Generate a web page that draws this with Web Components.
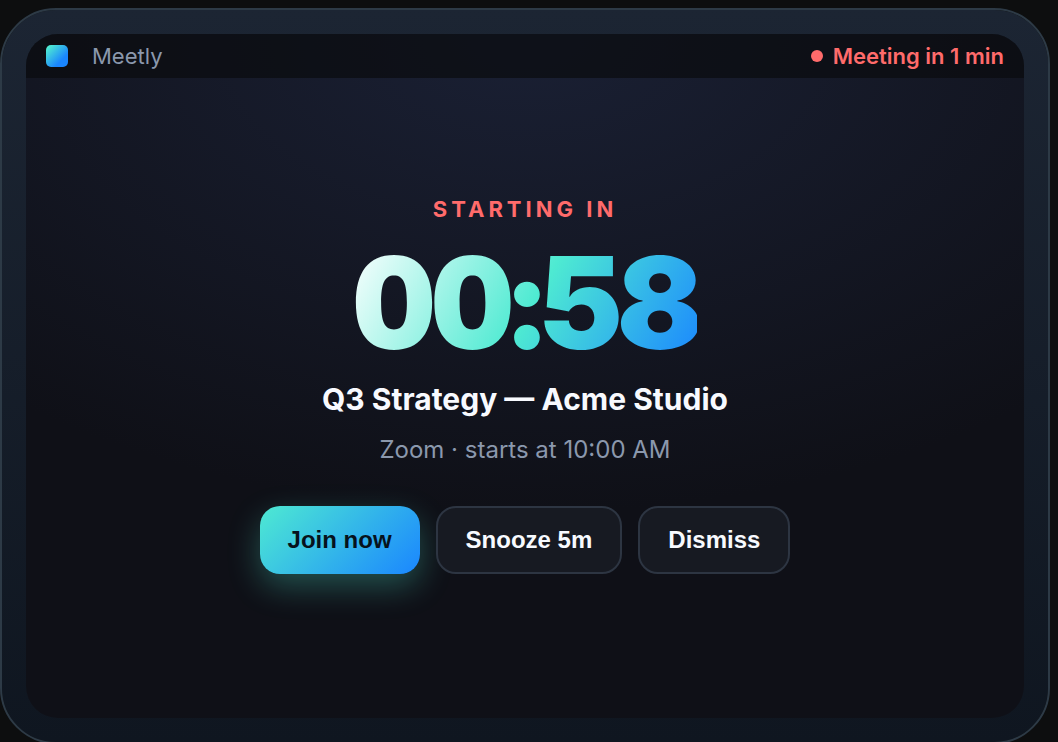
<!DOCTYPE html>
<html lang="en">
<head>
<meta charset="utf-8">
<title>Meetly</title>
<style>
  html { background: #0d0e0f; }
  body {
    margin: 0; height: 100vh; overflow: hidden; box-sizing: border-box;
    padding: 8px 8px 0 0; display: flex; flex-direction: column;
    font-family: Inter, sans-serif; color: #f8faff;
    background: #0d0e0f;
  }
</style>
</head>
<body>
<device-frame>
  <menu-bar slot="bar" name="Meetly" status="Meeting in 1 min"></menu-bar>
  <meeting-alert>
    <span slot="label">Starting in</span>
    <count-down slot="time">00:58</count-down>
    <span slot="title">Q3 Strategy — Acme Studio</span>
    <span slot="meta">Zoom · starts at 10:00 AM</span>
    <action-button slot="actions" primary>Join now</action-button>
    <action-button slot="actions">Snooze 5m</action-button>
    <action-button slot="actions">Dismiss</action-button>
  </meeting-alert>
</device-frame>
<script>
class Base extends HTMLElement {
  constructor() {
    super();
    this.attachShadow({ mode: "open" }).innerHTML = this.constructor.markup;
  }
}

customElements.define("device-frame", class extends Base {
  static markup = `
    <style>
      :host {
        display: flex; flex: 1; box-sizing: border-box; margin-bottom: -2px; padding: 24px;
        border: 2px solid #2d3a46; border-radius: 56px;
        background: linear-gradient(180deg, #1c2533 0%, #0f1620 100%) padding-box;
      }
      .screen {
        flex: 1; display: flex; flex-direction: column; overflow: hidden; border-radius: 32px;
        background: radial-gradient(ellipse 80% 70% at 50% 0%, #1a2034 0%, #0f1017 100%);
      }
    </style>
    <div class="screen"><slot name="bar"></slot><slot></slot></div>`;
});

customElements.define("menu-bar", class extends Base {
  static markup = `
    <style>
      :host { display: block; }
      header {
        display: flex; align-items: center; justify-content: space-between; box-sizing: border-box;
        height: 44px; padding: 0 20px; font-size: 22px; line-height: 28px; background: rgba(10, 11, 14, 0.7);
      }
      .app, .status { display: flex; align-items: center; }
      .app { gap: 24px; color: #8b98ad; }
      .logo { width: 22px; height: 22px; border-radius: 5px; background: linear-gradient(135deg, #4eead2 10%, #1a86ff 70%); }
      .status { gap: 10px; color: #ff6b6b; font-weight: 600; }
      .dot { width: 12px; height: 12px; border-radius: 50%; background: currentColor; }
    </style>
    <header>
      <div class="app"><span class="logo"></span><span class="name"></span></div>
      <div class="status"><span class="dot"></span><span class="text"></span></div>
    </header>`;
  connectedCallback() {
    this.shadowRoot.querySelector(".name").textContent = this.getAttribute("name");
    this.shadowRoot.querySelector(".text").textContent = this.getAttribute("status");
  }
});

customElements.define("meeting-alert", class extends Base {
  static markup = `
    <style>
      :host {
        flex: 1; display: flex; flex-direction: column; align-items: center; justify-content: center;
        padding-bottom: 28px; text-align: center;
      }
      .label { font-size: 22px; line-height: 28px; font-weight: 700; letter-spacing: 4px; text-transform: uppercase; color: #ff6b6b; }
      .time { margin: 16px 0 14px; }
      h1 { margin: 0 0 19px; font-size: 30px; line-height: 36px; font-weight: 700; }
      .meta { margin: 0; font-size: 24px; line-height: 28px; color: #8b98ad; }
      .actions { display: flex; gap: 16px; margin-top: 42px; }
    </style>
    <div class="label"><slot name="label"></slot></div>
    <div class="time"><slot name="time"></slot></div>
    <h1><slot name="title"></slot></h1>
    <p class="meta"><slot name="meta"></slot></p>
    <div class="actions"><slot name="actions"></slot></div>`;
});

customElements.define("count-down", class extends Base {
  static markup = `
    <style>
      :host {
        display: block; font-size: 128px; line-height: 128px; font-weight: 900; letter-spacing: -4px;
        font-variant-numeric: tabular-nums;
      }
      span {
        display: block; color: transparent;
        background: linear-gradient(120deg, #ffffff 0%, #4eead2 52%, #1a86ff 100%);
        -webkit-background-clip: text; background-clip: text;
      }
    </style>
    <span><slot></slot></span>`;
});

customElements.define("action-button", class extends Base {
  static markup = `
    <style>
      :host { display: block; }
      button {
        box-sizing: border-box; height: 68px; padding: 0 28px; border: 2px solid #2d3542; border-radius: 20px;
        font: 700 24px/28px "Liberation Sans", Arial, sans-serif; color: #f8faff; background: #171a22;
        cursor: pointer;
      }
      :host([primary]) button {
        border: 0; color: #06121c; background: linear-gradient(135deg, #4eead2, #1a86ff);
        box-shadow: 0 12px 32px rgba(78, 234, 210, 0.3);
      }
    </style>
    <button type="button"><slot></slot></button>`;
});
</script>
</body>
</html>
